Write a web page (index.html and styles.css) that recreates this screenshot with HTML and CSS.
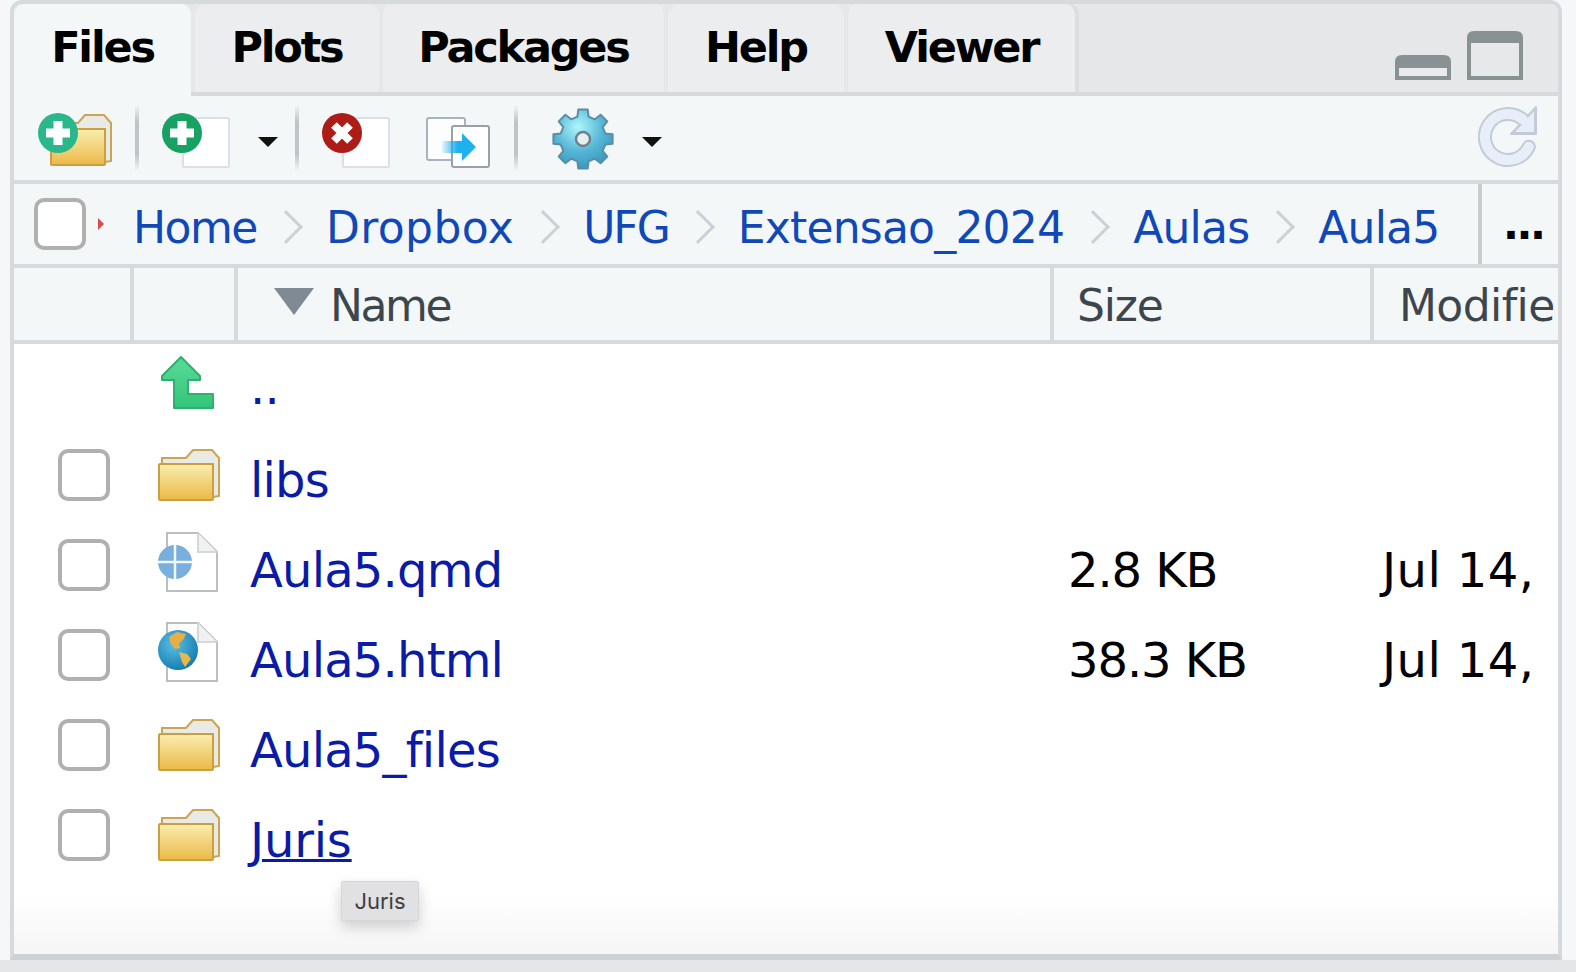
FILE: index.html
```html
<!DOCTYPE html>
<html lang="en">

<head>
    <meta charset="UTF-8">
    <title>Files pane</title>
    <link rel="stylesheet" href="styles.css">
</head>

<body>
    <!-- shared icon parts -->
    <svg class="defs" aria-hidden="true">
        <defs>
            <linearGradient id="folderFill" x1="0" y1="0" x2="0" y2="1">
                <stop offset="0" stop-color="#f9eeb0" />
                <stop offset="1" stop-color="#ebb947" />
            </linearGradient>
            <linearGradient id="upFill" x1="0" y1="0" x2="0" y2="1">
                <stop offset="0" stop-color="#5adb98" />
                <stop offset="1" stop-color="#33c47a" />
            </linearGradient>
            <linearGradient id="moveFill" x1="0" y1="0" x2="1" y2="0">
                <stop offset="0" stop-color="#1fb0f0" stop-opacity="0.1" />
                <stop offset="0.45" stop-color="#1fb0f0" />
            </linearGradient>
            <radialGradient id="gearFill" cx="0.42" cy="0.3" r="0.75">
                <stop offset="0" stop-color="#b0f6fc" />
                <stop offset="0.55" stop-color="#55b6d6" />
                <stop offset="1" stop-color="#3596bd" />
            </radialGradient>
            <radialGradient id="globeFill" cx="0.4" cy="0.35" r="0.7">
                <stop offset="0" stop-color="#5cc0e6" />
                <stop offset="1" stop-color="#1279ad" />
            </radialGradient>
            <symbol id="folder" viewBox="0 0 62 52">
                <path d="M4 15V9H28L35 1H54L61 9V47L55 48V15Z" fill="#e9e9e6" stroke="#cba552" stroke-width="2" />
                <rect x="1" y="15" width="54" height="36" rx="1" fill="url(#folderFill)" stroke="#c99f3f" stroke-width="2" />
            </symbol>
            <symbol id="page" viewBox="0 0 52 60">
                <path d="M1 1H32L51 20V59H1Z" fill="#fff" stroke="#bcbfc1" stroke-width="2" />
                <path d="M32 1V20H51" fill="#f0f1f2" stroke="#d5d7d9" stroke-width="2" />
            </symbol>
        </defs>
    </svg>

    <div class="panel">
        <div class="tabbar">
            <div class="tab tab-files active">Files</div>
            <div class="tab tab-plots">Plots</div>
            <div class="tab tab-packages">Packages</div>
            <div class="tab tab-help">Help</div>
            <div class="tab tab-viewer">Viewer</div>
            <div class="window-btns">
                <svg class="btn-min" viewBox="0 0 56 25">
                    <path d="M0 25V7Q0 0 7 0H49Q56 0 56 7V25Z" fill="#8a9195" />
                    <rect x="4" y="13" width="48" height="8" fill="#e9eaec" />
                </svg>
                <svg class="btn-max" viewBox="0 0 56 49">
                    <path d="M0 49V7Q0 0 7 0H49Q56 0 56 7V49Z" fill="#8a9195" />
                    <rect x="4" y="12" width="48" height="33" fill="#e7e8ea" />
                </svg>
            </div>
        </div>

        <div class="toolbar">
            <svg class="tb-newfolder" viewBox="0 0 74 70">
                <use href="#folder" x="12" y="10" width="62" height="52" />
                <circle cx="20" cy="29" r="20" fill="#29b78b" />
                <path d="M20 17V41M8 29H32" stroke="#fff" stroke-width="9" />
            </svg>
            <div class="tb-sep first"></div>
            <svg class="tb-newfile" viewBox="0 0 68 70">
                <rect x="21" y="14" width="46" height="49" rx="1" fill="#fff" stroke="#dce0e6" stroke-width="2" />
                <circle cx="20" cy="29" r="20" fill="#17a163" />
                <path d="M20 17V41M8 29H32" stroke="#fff" stroke-width="9" />
            </svg>
            <div class="caret first"></div>
            <div class="tb-sep second"></div>
            <svg class="tb-delete" viewBox="0 0 68 70">
                <rect x="21" y="14" width="46" height="49" rx="1" fill="#fff" stroke="#dce0e6" stroke-width="2" />
                <circle cx="20" cy="29" r="20" fill="#ae1c17" />
                <path d="M12 21L28 37M28 21L12 37" stroke="#fff" stroke-width="8" />
            </svg>
            <svg class="tb-move" viewBox="0 0 64 70">
                <rect x="1" y="14" width="38" height="42" rx="2" fill="#fcfdfe" stroke="#aab2bd" stroke-width="2" />
                <rect x="26" y="22" width="37" height="41" rx="2" fill="#fff" stroke="#98a0aa" stroke-width="2" />
                <path d="M16 37H36V29L50 43L36 57V49H16Z" fill="url(#moveFill)" />
            </svg>
            <div class="tb-sep third"></div>
            <svg class="tb-gear" viewBox="-31 -31 62 62">
                <path d="M-5.6 -22.3L-4.7 -29.6L4.7 -29.6L5.6 -22.3L11.8 -19.7L17.6 -24.3L24.3 -17.6L19.7 -11.8L22.3 -5.6L29.6 -4.7L29.6 4.7L22.3 5.6L19.7 11.8L24.3 17.6L17.6 24.3L11.8 19.7L5.6 22.3L4.7 29.6L-4.7 29.6L-5.6 22.3L-11.8 19.7L-17.6 24.3L-24.3 17.6L-19.7 11.8L-22.3 5.6L-29.6 4.7L-29.6 -4.7L-22.3 -5.6L-19.7 -11.8L-24.3 -17.6L-17.6 -24.3L-11.8 -19.7Z"
                    fill="url(#gearFill)" stroke="#5b8ea5" stroke-width="2" stroke-linejoin="round" />
                <circle r="7" fill="#e9eff1" stroke="#6f818a" stroke-width="2.5" />
            </svg>
            <div class="caret second"></div>
            <svg class="tb-refresh" viewBox="0 0 60 62">
                <g fill="none">
                    <path d="M44.8 13.4A23 23 0 1 0 50.8 40.7" stroke="#c3cbd7" stroke-width="14" stroke-linecap="round" />
                    <path d="M58 1V28H33Z" fill="#c3cbd7" stroke="#c3cbd7" stroke-width="2" stroke-linejoin="round" />
                    <path d="M44.8 13.4A23 23 0 1 0 50.8 40.7" stroke="#e7eef9" stroke-width="10" stroke-linecap="round" />
                    <path d="M56 5V26H37Z" fill="#e7eef9" />
                </g>
            </svg>
        </div>

        <div class="breadcrumb">
            <div class="check"></div>
            <div class="crumb-mark"></div>
            <div class="crumbs">
                <a class="crumb crumb-home">Home</a><span class="chevron"></span>
                <a class="crumb crumb-dropbox">Dropbox</a><span class="chevron"></span>
                <a class="crumb crumb-ufg">UFG</a><span class="chevron"></span>
                <a class="crumb">Extensao_2024</a><span class="chevron"></span>
                <a class="crumb">Aulas</a><span class="chevron"></span>
                <a class="crumb">Aula5</a>
            </div>
            <div class="more">...</div>
        </div>

        <div class="columns">
            <div class="col col-check"></div>
            <div class="col col-icon"></div>
            <div class="col col-name"><span class="sort-arrow"></span>Name</div>
            <div class="col col-size">Size</div>
            <div class="col col-modified">Modifie</div>
        </div>

        <div class="list">
            <div class="row parent">
                <div class="check hidden"></div>
                <svg class="file-icon" viewBox="0 0 62 60">
                    <path d="M5 27L24 8L43 27V31H31V45H56V59H17V31H5Z" transform="translate(-1 -7)" fill="url(#upFill)" stroke="#2fb06d" stroke-width="2" stroke-linejoin="round" />
                </svg>
                <a class="name">..</a>
            </div>
            <div class="row">
                <div class="check"></div>
                <svg class="file-icon" viewBox="0 0 62 60"><use href="#folder" y="4" width="62" height="52" /></svg>
                <a class="name">libs</a>
            </div>
            <div class="row">
                <div class="check"></div>
                <svg class="file-icon doc" viewBox="0 0 62 60">
                    <use href="#page" x="8" width="52" height="60" />
                    <circle cx="17" cy="30" r="17" fill="#79afdd" />
                    <path d="M17 13V47M0 30H34" stroke="#f4f7fa" stroke-width="2.5" />
                </svg>
                <a class="name">Aula5.qmd</a>
                <span class="size">2.8 KB</span>
                <span class="date">Jul 14,</span>
            </div>
            <div class="row">
                <div class="check"></div>
                <svg class="file-icon doc" viewBox="0 0 62 60">
                    <use href="#page" x="8" width="52" height="60" />
                    <circle cx="20" cy="28" r="20" fill="url(#globeFill)" />
                    <path d="M11 15L19 10L28 12L25 18L21 21L22 26L17 27L13 22Z" fill="#e9ae45" />
                    <path d="M21 30L29 32L33 37L27 45L24 40Z" fill="#e9b84c" />
                </svg>
                <a class="name">Aula5.html</a>
                <span class="size">38.3 KB</span>
                <span class="date">Jul 14,</span>
            </div>
            <div class="row">
                <div class="check"></div>
                <svg class="file-icon" viewBox="0 0 62 60"><use href="#folder" y="4" width="62" height="52" /></svg>
                <a class="name">Aula5_files</a>
            </div>
            <div class="row">
                <div class="check"></div>
                <svg class="file-icon" viewBox="0 0 62 60"><use href="#folder" y="4" width="62" height="52" /></svg>
                <a class="name hover">Juris</a>
            </div>
            <div class="tooltip">Juris</div>
        </div>
    </div>
    <div class="bottom-band"></div>
</body>

</html>
```

FILE: styles.css
```css
html,
body {
    height: 100%;
}

body {
    margin: 0;
    overflow: hidden;
    background-color: #f5f7f9;
    font-family: "DejaVu Sans", sans-serif;
}

.defs {
    position: absolute;
    width: 0;
    height: 0;
}

.panel {
    width: 1544px;
    height: 950px;
    margin-left: 10px;
    border: 4px solid #d6dadc;
    border-bottom: 6px solid #ced1d4;
    border-radius: 12px 12px 0 0;
    overflow: hidden;
    display: flex;
    flex-direction: column;
    background-color: #f4f7f8;
}

.bottom-band {
    height: 12px;
    background-color: #e4e6e8;
}

/* tabs */
.tabbar {
    flex: none;
    height: 88px;
    display: flex;
    gap: 4px;
    background-color: #e6e7e9;
    border-bottom: 4px solid #d6dadc;
}

.tab {
    display: flex;
    align-items: center;
    justify-content: center;
    box-sizing: border-box;
    height: 88px;
    padding-bottom: 2px;
    font-size: 43px;
    font-weight: 700;
    letter-spacing: -2.2px;
    color: #000;
    background-color: #ecedef;
    border-radius: 10px 10px 0 0;
}

.tab.active {
    height: 92px;
    padding-bottom: 6px;
    background-color: #f4f7f8;
}

.tab-files {
    width: 177px;
}

.tab-plots {
    width: 184px;
}

.tab-packages {
    width: 281px;
}

.tab-help {
    width: 176px;
}

.tab-viewer {
    width: 227px;
    box-shadow: 4px 0 0 #dcdee0;
}

.window-btns {
    margin-left: auto;
    margin-right: 35px;
    margin-top: 27px;
    display: flex;
    align-items: flex-end;
    gap: 16px;
    height: 49px;
}

.btn-min {
    width: 56px;
    height: 25px;
}

.btn-max {
    width: 56px;
    height: 49px;
}

/* toolbar */
.toolbar {
    flex: none;
    height: 84px;
    padding-left: 24px;
    padding-right: 20px;
    display: flex;
    align-items: center;
    border-bottom: 4px solid #d6dadc;
}

.toolbar svg {
    flex: none;
    height: 70px;
    margin-top: 2px;
    filter: blur(0.4px);
}

.tb-newfolder {
    width: 74px;
}

.tb-sep {
    flex: none;
    width: 4px;
    height: 66px;
    background: linear-gradient(to bottom, #f4f7f8, #c0c4c7 25%, #c0c4c7 75%, #f4f7f8);
}

.tb-sep.first {
    margin-left: 23px;
}

.tb-newfile {
    width: 68px;
    margin-left: 23px;
}

.caret {
    flex: none;
    width: 0;
    height: 0;
    margin-top: 8px;
    border-left: 10px solid transparent;
    border-right: 10px solid transparent;
    border-top: 10px solid #111;
}

.caret.first {
    margin-left: 28px;
}

.tb-sep.second {
    margin-left: 17px;
}

.tb-delete {
    width: 68px;
    margin-left: 23px;
}

.tb-move {
    width: 64px;
    margin-left: 36px;
}

.tb-sep.third {
    margin-left: 24px;
}

.toolbar .tb-gear {
    width: 62px;
    height: 62px;
    margin-left: 34px;
    margin-top: 2px;
}

.caret.second {
    margin-left: 28px;
}

.toolbar .tb-refresh {
    width: 60px;
    height: 62px;
    margin-left: auto;
    margin-top: -2px;
}

/* breadcrumb */
.breadcrumb {
    flex: none;
    height: 80px;
    padding-left: 20px;
    display: flex;
    align-items: center;
    border-bottom: 4px solid #d6dadc;
}

.check {
    flex: none;
    width: 52px;
    height: 52px;
    box-sizing: border-box;
    border: 4px solid #b0b0b0;
    border-radius: 10px;
    background-color: #fff;
}

.check.hidden {
    visibility: hidden;
}

.crumb-mark {
    flex: none;
    margin-left: 12px;
    width: 0;
    height: 0;
    border-top: 6px solid transparent;
    border-bottom: 6px solid transparent;
    border-left: 6px solid #d84a4a;
}

.crumbs {
    flex: 1;
    margin-left: 29px;
    padding-top: 6px;
    display: flex;
    align-items: center;
    font-size: 44px;
    letter-spacing: -0.8px;
    color: #1148b8;
    white-space: nowrap;
}

.crumb-home {
    letter-spacing: -1.5px;
}

.crumb-dropbox {
    letter-spacing: 0.4px;
}

.crumb-ufg {
    letter-spacing: -2px;
}

.chevron {
    flex: none;
    width: 24px;
    height: 24px;
    margin-left: 17px;
    margin-right: 28px;
    box-sizing: border-box;
    border-top: 3px solid #cdd1d6;
    border-right: 3px solid #cdd1d6;
    transform: rotate(45deg);
}

.more {
    flex: none;
    width: 80px;
    height: 80px;
    box-sizing: border-box;
    border-left: 4px solid #c8ccd0;
    padding-left: 21px;
    padding-top: 16px;
    font-size: 42px;
    font-weight: 700;
    letter-spacing: -2.5px;
    color: #000;
}

/* column headers */
.columns {
    flex: none;
    height: 72px;
    display: flex;
    border-bottom: 4px solid #d6dadc;
    font-size: 44px;
    letter-spacing: -1.2px;
    color: #3e464d;
}

.col {
    box-sizing: border-box;
    height: 72px;
    display: flex;
    align-items: center;
    padding-top: 2px;
    border-right: 4px solid #d6dadc;
    white-space: nowrap;
}

.col-check {
    width: 120px;
}

.col-icon {
    width: 104px;
}

.col-name {
    width: 816px;
    padding-left: 36px;
    letter-spacing: -2.4px;
}

.sort-arrow {
    flex: none;
    margin-right: 16px;
    margin-bottom: 8px;
    width: 0;
    height: 0;
    border-left: 20px solid transparent;
    border-right: 20px solid transparent;
    border-top: 27px solid #7f8a94;
}

.col-size {
    width: 320px;
    padding-left: 23px;
}

.col-modified {
    flex: 1;
    min-width: 0;
    padding-left: 25px;
    border-right: none;
    letter-spacing: -0.6px;
}

/* file rows */
.list {
    flex: 1;
    position: relative;
    background: linear-gradient(to bottom, #fff 90%, #f5f5f6);
    font-size: 48px;
    letter-spacing: -0.8px;
}

.row {
    height: 90px;
    padding-left: 44px;
    display: flex;
    align-items: center;
}

.row.parent {
    height: 86px;
    align-items: flex-start;
}

.row.parent .file-icon {
    margin-top: 12px;
}

.file-icon {
    flex: none;
    width: 62px;
    height: 60px;
    margin-left: 48px;
    margin-right: 30px;
}

.file-icon.doc {
    margin-bottom: 6px;
}

.name {
    width: 818px;
    flex: none;
    padding-top: 10px;
    color: #0a1ba5;
    white-space: nowrap;
}

.row.parent .name {
    padding-top: 0;
    margin-top: 15px;
}

.name.hover {
    letter-spacing: -0.2px;
    text-decoration: underline;
    text-decoration-thickness: 3px;
}

.size {
    flex: none;
    width: 314px;
    padding-top: 10px;
    letter-spacing: -1.1px;
    color: #000;
}

.date {
    flex: none;
    padding-top: 10px;
    letter-spacing: 0.4px;
    color: #000;
}

.tooltip {
    position: absolute;
    left: 327px;
    top: 537px;
    width: 78px;
    height: 40px;
    box-sizing: border-box;
    display: flex;
    align-items: center;
    justify-content: center;
    font-family: Inter, sans-serif;
    font-size: 22px;
    letter-spacing: 0;
    color: #3f3f3f;
    background-color: #e1e0e3;
    border: 1px solid #d6d6d8;
    border-radius: 2px;
    box-shadow: 0 6px 14px rgba(0, 0, 0, 0.18);
}
```
